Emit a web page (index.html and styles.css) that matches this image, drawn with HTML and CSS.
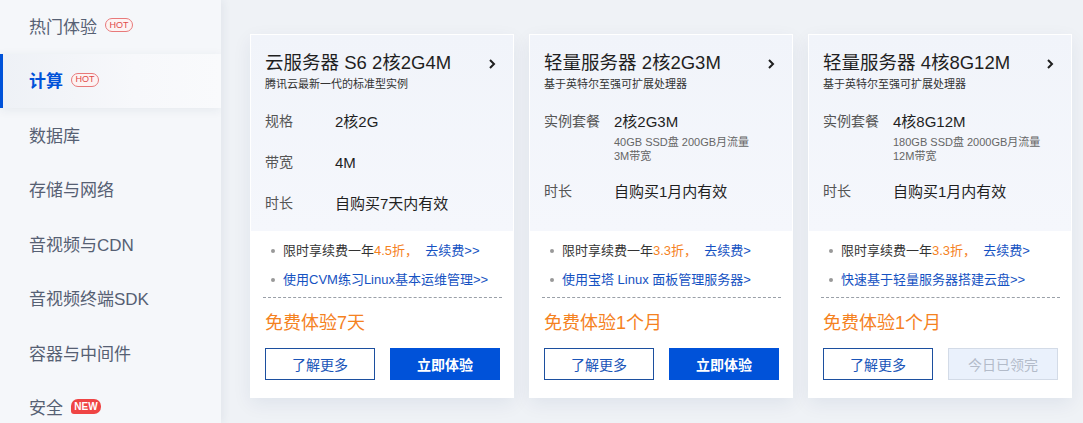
FILE: index.html
```html
<!DOCTYPE html>
<html lang="zh-CN">
<head>
<meta charset="utf-8">
<title>计算</title>
<link rel="stylesheet" href="styles.css">
</head>
<body>
<div class="page">
  <aside class="side">
    <div class="nav-list">
      <div class="nav-item"><span>热门体验</span><span class="hot">HOT</span></div>
      <div class="nav-item active"><span>计算</span><span class="hot">HOT</span></div>
      <div class="nav-item"><span>数据库</span></div>
      <div class="nav-item"><span>存储与网络</span></div>
      <div class="nav-item"><span>音视频与CDN</span></div>
      <div class="nav-item"><span>音视频终端SDK</span></div>
      <div class="nav-item"><span>容器与中间件</span></div>
      <div class="nav-item"><span>安全</span><span class="new">NEW</span></div>
    </div>
  </aside>
  <main class="main">
    <div class="cards">
      <div class="card">
        <div class="card-top">
          <div class="title-row">
            <h3 class="title">云服务器 S6 2核2G4M</h3>
            <svg class="chev" width="8" height="12" viewBox="0 0 8 12"><polyline points="2,2 6,6 2,10" fill="none" stroke="#1f1f1f" stroke-width="2"/></svg>
          </div>
          <p class="subtitle">腾讯云最新一代的标准型实例</p>
          <div class="specs">
            <div class="spec"><span class="label">规格</span><div class="val"><div class="v">2核2G</div></div></div>
            <div class="spec"><span class="label">带宽</span><div class="val"><div class="v">4M</div></div></div>
            <div class="spec"><span class="label">时长</span><div class="val"><div class="v">自购买7天内有效</div></div></div>
          </div>
        </div>
        <div class="card-bottom">
          <ul class="bullets">
            <li><span>限时享续费一年<em class="org">4.5折，</em>&nbsp;&nbsp;<a class="lnk">去续费&gt;&gt;</a></span></li>
            <li><span><a class="lnk">使用CVM练习Linux基本运维管理&gt;&gt;</a></span></li>
          </ul>
          <div class="dash"></div>
          <div class="free">免费体验7天</div>
          <div class="btns"><a class="btn outline">了解更多</a><a class="btn primary">立即体验</a></div>
        </div>
      </div>

      <div class="card">
        <div class="card-top">
          <div class="title-row">
            <h3 class="title">轻量服务器 2核2G3M</h3>
            <svg class="chev" width="8" height="12" viewBox="0 0 8 12"><polyline points="2,2 6,6 2,10" fill="none" stroke="#1f1f1f" stroke-width="2"/></svg>
          </div>
          <p class="subtitle">基于英特尔至强可扩展处理器</p>
          <div class="specs">
            <div class="spec"><span class="label">实例套餐</span><div class="val"><div class="v">2核2G3M</div><div class="sub">40GB SSD盘 200GB月流量<br>3M带宽</div></div></div>
            <div class="spec"><span class="label">时长</span><div class="val"><div class="v">自购买1月内有效</div></div></div>
          </div>
        </div>
        <div class="card-bottom">
          <ul class="bullets">
            <li><span>限时享续费一年<em class="org">3.3折，</em>&nbsp;&nbsp;<a class="lnk">去续费&gt;</a></span></li>
            <li><span><a class="lnk">使用宝塔 Linux 面板管理服务器&gt;</a></span></li>
          </ul>
          <div class="dash"></div>
          <div class="free">免费体验1个月</div>
          <div class="btns"><a class="btn outline">了解更多</a><a class="btn primary">立即体验</a></div>
        </div>
      </div>

      <div class="card">
        <div class="card-top">
          <div class="title-row">
            <h3 class="title">轻量服务器 4核8G12M</h3>
            <svg class="chev" width="8" height="12" viewBox="0 0 8 12"><polyline points="2,2 6,6 2,10" fill="none" stroke="#1f1f1f" stroke-width="2"/></svg>
          </div>
          <p class="subtitle">基于英特尔至强可扩展处理器</p>
          <div class="specs">
            <div class="spec"><span class="label">实例套餐</span><div class="val"><div class="v">4核8G12M</div><div class="sub">180GB SSD盘 2000GB月流量<br>12M带宽</div></div></div>
            <div class="spec"><span class="label">时长</span><div class="val"><div class="v">自购买1月内有效</div></div></div>
          </div>
        </div>
        <div class="card-bottom">
          <ul class="bullets">
            <li><span>限时享续费一年<em class="org">3.3折，</em>&nbsp;&nbsp;<a class="lnk">去续费&gt;</a></span></li>
            <li><span><a class="lnk">快速基于轻量服务器搭建云盘&gt;&gt;</a></span></li>
          </ul>
          <div class="dash"></div>
          <div class="free">免费体验1个月</div>
          <div class="btns"><a class="btn outline">了解更多</a><a class="btn disabled">今日已领完</a></div>
        </div>
      </div>
    </div>
  </main>
</div>
</body>
</html>
```

FILE: styles.css
```css
* { box-sizing: border-box; }
html, body { margin: 0; padding: 0; }
body {
  width: 1083px;
  height: 423px;
  overflow: hidden;
  font-family: "Liberation Sans", "Noto Sans CJK SC", sans-serif;
  background: #eff2f6;
}
.page {
  display: flex;
  height: 423px;
}
.side {
  width: 221px;
  flex: none;
  background: #f5f7fa;
  box-shadow: 3px 0 8px rgba(30, 50, 90, 0.06);
  overflow: hidden;
  position: relative;
  z-index: 1;
}
.nav-list {
  margin-top: -1px;
  display: flex;
  flex-direction: column;
}
.nav-item {
  height: 54.5px;
  flex: none;
  display: flex;
  align-items: center;
  gap: 8px;
  padding-left: 29px;
  padding-bottom: 2px;
  font-size: 17px;
  color: #566073;
  border-left: 3px solid transparent;
}
.nav-item > span:first-child { margin-left: -3px; }
.nav-item.active {
  border-left-color: #0052d9;
  background: linear-gradient(90deg, #eef1f6 0%, #f7f8fb 60%, #f9fafc 100%);
  box-shadow: 0 2px 10px rgba(30, 50, 90, 0.07);
  color: #0052d9;
  font-weight: bold;
}
.hot {
  display: inline-flex;
  align-items: center;
  justify-content: center;
  width: 28px;
  height: 14px;
  border: 1px solid #e8797a;
  border-radius: 7px;
  background: #fdf3f3;
  color: #e04a4a;
  font-size: 9px;
  font-weight: normal;
  font-family: "Liberation Sans", sans-serif;
  line-height: 1;
}
.new {
  display: inline-flex;
  align-items: center;
  justify-content: center;
  width: 30px;
  height: 15px;
  border-radius: 7px 7px 7px 3px;
  background: #ef4444;
  color: #fff;
  font-size: 10px;
  font-weight: bold;
  font-family: "Liberation Sans", sans-serif;
  line-height: 1;
}
.main {
  flex: 1;
  padding: 34px 0 0 29px;
}
.cards {
  display: grid;
  grid-template-columns: repeat(3, 264px);
  column-gap: 15px;
  align-items: stretch;
}
.card {
  display: flex;
  flex-direction: column;
  background: #fff;
  border: 1px solid #fff;
  box-shadow: 0 6px 18px rgba(20, 45, 100, 0.07);
}
.card-top {
  flex: 1;
  background: linear-gradient(180deg, #f1f4fa 0%, #f5f7fc 100%);
  padding: 15px 17px 17px 14px;
}
.title-row {
  display: flex;
  align-items: center;
  justify-content: space-between;
}
.title {
  margin: 0;
  font-size: 18.5px;
  line-height: 26px;
  font-weight: normal;
  color: #1f1f1f;
}
.chev { display: block; margin-top: 2px; }
.subtitle {
  margin: 0;
  font-size: 11px;
  line-height: 16px;
  color: #333;
}
.specs {
  margin-top: 19px;
  display: flex;
  flex-direction: column;
  gap: 20px;
}
.spec {
  display: flex;
  align-items: flex-start;
}
.label {
  width: 70px;
  flex: none;
  font-size: 14px;
  line-height: 21px;
  color: #555;
}
.v {
  font-size: 15px;
  line-height: 21px;
  color: #1f1f1f;
}
.sub {
  margin-top: 3px;
  margin-bottom: -2px;
  font-size: 11px;
  line-height: 14px;
  color: #666;
}
.card-bottom {
  padding: 10px 13px 17px 14px;
}
.bullets {
  list-style: none;
  margin: 0;
  padding: 0;
  display: flex;
  flex-direction: column;
  gap: 9px;
}
.bullets li {
  display: flex;
  align-items: center;
  font-size: 13px;
  line-height: 20px;
  color: #333;
  padding-left: 6px;
}
.bullets li::before {
  content: "";
  width: 4px;
  height: 4px;
  border-radius: 50%;
  background: #999;
  margin-right: 8px;
  flex: none;
}
.org { font-style: normal; color: #f5821f; }
.lnk { color: #1552c2; text-decoration: none; }
.dash {
  margin: 7px -2px 0 -2px;
  border-top: 1px dashed #9aa0a8;
}
.free {
  margin-top: 12px;
  font-size: 18px;
  line-height: 26px;
  color: #f5821f;
}
.btns {
  margin-top: 12px;
  display: flex;
  justify-content: space-between;
}
.btn {
  width: 110px;
  height: 32px;
  display: flex;
  align-items: center;
  justify-content: center;
  font-size: 14px;
  text-decoration: none;
}
.btn.outline {
  border: 1px solid #1c4f9f;
  color: #1a55b8;
  background: #fff;
}
.btn.primary {
  background: #0052d9;
  color: #fff;
  font-weight: bold;
}
.btn.disabled {
  background: #eaf1fc;
  border: 1px solid #d3dbe7;
  color: #b3bbc9;
}
```
